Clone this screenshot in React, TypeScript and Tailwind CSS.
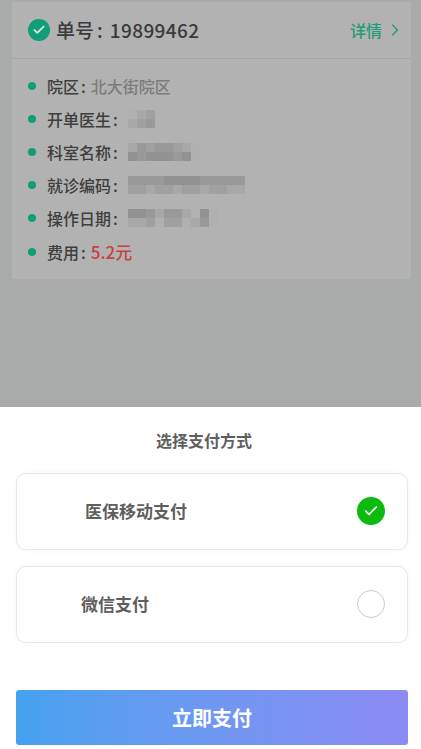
import { Check, ChevronRight } from "lucide-react";

const fontClass = "font-['Noto_Sans_CJK_SC','Noto_Sans',sans-serif]";

// pixelated patches over the private values, one string per row, digits are gray steps
const SHADES: Record<string, string> = {
  "0": "#b0b0b0",
  "1": "#a8a8a8",
  "2": "#a0a0a0",
  "3": "#999999",
  "4": "#929292",
  "5": "#8b8b8b",
};

function Mosaic({ rows }: { rows: string[] }) {
  return (
    <span className="ml-[5px] flex flex-col blur-[0.6px]">
      {rows.map((row, i) => (
        <span key={i} className="flex h-[9px]">
          {row.split("").map((c, j) => (
            <span key={j} className="h-[9px] w-[9px]" style={{ background: SHADES[c] }} />
          ))}
        </span>
      ))}
    </span>
  );
}

function InfoRow({ label, children }: { label: string; children: React.ReactNode }) {
  return (
    <li className="flex h-[33.2px] items-center">
      <span className="h-[8px] w-[8px] rounded-full bg-[#0f9e78]" />
      <span className="ml-[11px] text-[16px] font-medium text-[#3e3e3e]">
        {label}
        <span className="ml-[2px]">:</span>
      </span>
      <span className="ml-[5px] flex items-center">{children}</span>
    </li>
  );
}

function PayOption({ label, indent, selected }: { label: string; indent: string; selected?: boolean }) {
  return (
    <div className="flex h-[77px] items-center justify-between rounded-[10px] border border-[#e8e8e8] bg-white pb-[1px] pr-[22px] shadow-[0_0_6px_rgba(0,0,0,0.04)]">
      <span className={`text-[17px] font-bold text-[#5f5f5f] ${indent}`}>{label}</span>
      {selected ? (
        <span className="flex h-[28px] w-[28px] items-center justify-center rounded-full bg-[#0bbb0f]">
          <Check className="h-[16px] w-[16px] text-white" strokeWidth={2.5} />
        </span>
      ) : (
        <span className="h-[28px] w-[28px] rounded-full border border-[#cccccc]" />
      )}
    </div>
  );
}

export default function App() {
  return (
    <div className={`flex h-[749px] w-[421px] flex-col overflow-hidden bg-[#a9abaa] ${fontClass}`}>
      <div className="h-[407px] shrink-0 pl-3 pr-[10px] pt-[2px]">
        <div className="h-[277px] bg-[#b2b2b2]">
          <div className="flex h-[57px] items-center justify-between border-b border-[#a6a6a6] pl-[16px] pr-[6px]">
            <div className="flex items-center">
              <span className="flex h-[22px] w-[22px] items-center justify-center rounded-full bg-[#0f9e78]">
                <Check className="h-[14px] w-[14px] text-[#e6e6e6]" strokeWidth={3} />
              </span>
              <span className="ml-[6px] text-[19px] font-medium text-[#3a3a3a]">
                单号<span className="ml-[3px]">:</span>
                <span className="ml-[7px] tracking-[0.4px]">19899462</span>
              </span>
            </div>
            <div className="flex items-center text-[#1f9c79]">
              <span className="text-[16px] font-medium">详情</span>
              <ChevronRight className="ml-[3px] h-[20px] w-[20px]" strokeWidth={1.5} />
            </div>
          </div>
          <ul className="pl-[16px] pt-[10px]">
            <InfoRow label="院区">
              <span className="text-[16px] font-medium text-[#7b7b7b]">北大街院区</span>
            </InfoRow>
            <InfoRow label="开单医生">
              <Mosaic rows={["012", "123"]} />
            </InfoRow>
            <InfoRow label="科室名称">
              <Mosaic rows={["13233210", "43444340"]} />
            </InfoRow>
            <InfoRow label="就诊编码">
              <Mosaic rows={["3333444433333", "2212212212211"]} />
            </InfoRow>
            <InfoRow label="操作日期">
              <Mosaic rows={["4431331040", "1120220130"]} />
            </InfoRow>
            <InfoRow label="费用">
              <span className="text-[17px] font-medium text-[#c5423f]">5.2元</span>
            </InfoRow>
          </ul>
        </div>
      </div>
      <div className="flex flex-1 flex-col bg-white pl-[16px] pr-[13px]">
        <p className="mr-[16px] mt-[22px] text-center text-[16px] font-bold leading-[22px] text-[#5f5f5f]">
          选择支付方式
        </p>
        <div className="mt-[22px] flex flex-col gap-[16px]">
          <PayOption label="医保移动支付" indent="ml-[68px]" selected />
          <PayOption label="微信支付" indent="ml-[64px]" />
        </div>
        <button
          type="button"
          className="mt-[47px] h-[55px] rounded-[3px] bg-gradient-to-r from-[#44a2ee] to-[#8b8bf4] text-[20px] font-bold text-white"
        >
          立即支付
        </button>
      </div>
    </div>
  );
}
